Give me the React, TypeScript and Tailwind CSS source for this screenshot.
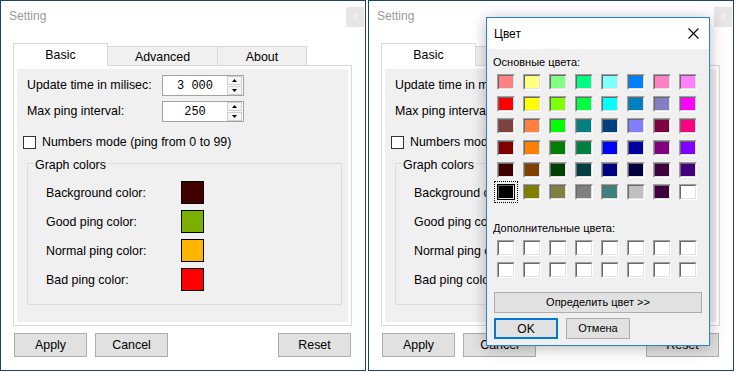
const basicColors = [
  ["#ff8080", "#ffff80", "#80ff80", "#00ff80", "#80ffff", "#0080ff", "#ff80c0", "#ff80ff"],
  ["#ff0000", "#ffff00", "#80ff00", "#00ff40", "#00ffff", "#0080c0", "#8080c0", "#ff00ff"],
  ["#804040", "#ff8040", "#00ff00", "#008080", "#004080", "#8080ff", "#800040", "#ff0080"],
  ["#800000", "#ff8000", "#008000", "#008040", "#0000ff", "#0000a0", "#800080", "#8000ff"],
  ["#400000", "#804000", "#004000", "#004040", "#000080", "#000040", "#400040", "#400080"],
  ["#000000", "#808000", "#808040", "#808080", "#408080", "#c0c0c0", "#400040", "#ffffff"],
];

const graphColors = [
  { label: "Background color:", color: "#400000" },
  { label: "Good ping color:", color: "#7cb000" },
  { label: "Normal ping color:", color: "#ffb400" },
  { label: "Bad ping color:", color: "#ff0000" },
];

function Arrow({ up }: { up?: boolean }) {
  return (
    <svg width="5" height="3" viewBox="0 0 5 3">
      <polygon points={up ? "0,3 2.5,0 5,3" : "0,0 2.5,3 5,0"} fill="#000" />
    </svg>
  );
}

function Spinner({ value }: { value: string }) {
  return (
    <div className="flex w-[82px] h-[21px] border border-[#a2a2a2] bg-white">
      <div className="flex-1 flex items-center justify-center font-['Liberation_Mono',monospace] text-[12px]">
        {value}
      </div>
      <div className="flex flex-col gap-[1px] pr-[1px] w-[16px]">
        <div className="flex-1 flex items-center justify-center border border-[#cfcfcf] bg-[#f6f6f6]">
          <Arrow up />
        </div>
        <div className="flex-1 flex items-center justify-center border border-[#cfcfcf] bg-[#f6f6f6]">
          <Arrow />
        </div>
      </div>
    </div>
  );
}

function Button({ label, className = "" }: { label: string; className?: string }) {
  return (
    <div className={`flex items-center justify-center w-[73px] h-[24px] border border-[#adadad] bg-[#e1e1e1] ${className}`}>
      {label}
    </div>
  );
}

function SettingWindow() {
  return (
    <div className="w-[366px] h-[371px] border border-[#1d4471] bg-white text-[12.4px]">
      <div className="w-[364px]">
        {/* title */}
        <div className="flex items-start justify-between h-[42px]">
          <span className="ml-[8px] mt-[8px] leading-[14px] text-[12px] text-[#9a9a9a]">Setting</span>
          <div className="mt-[6px] mr-[1px] flex items-center justify-center w-[18px] h-[20px] bg-[#e6e6e6] text-[9px] text-[#fafafa]">
            x
          </div>
        </div>

        {/* tabs */}
        <div className="flex items-end h-[22px] pl-[12px]">
          <div className="relative z-10 -mb-[1px] flex items-center justify-center w-[95px] h-[23px] border border-b-0 border-[#d9d9d9] bg-white">
            Basic
          </div>
          <div className="flex items-center justify-center pt-[3px] w-[110px] h-[19px] border-t border-r border-[#d9d9d9] bg-[#f0f0f0]">
            Advanced
          </div>
          <div className="flex items-center justify-center pt-[3px] w-[89px] h-[19px] border-t border-r border-[#d9d9d9] bg-[#f0f0f0]">
            About
          </div>
        </div>

        {/* tab page */}
        <div className="ml-[12px] w-[339px] h-[261px] border border-[#d9d9d9] bg-white p-[3px]">
          <div className="h-full bg-[#f0f0f0] pt-[6px]">
            <div className="flex items-center">
              <div className="w-[145px] pl-[10px]">Update time in milisec:</div>
              <Spinner value="3 000" />
            </div>
            <div className="flex items-center mt-[5px]">
              <div className="w-[145px] pl-[10px]">Max ping interval:</div>
              <Spinner value="250" />
            </div>

            <div className="flex items-center gap-[6px] mt-[14px] ml-[6px] h-[13px]">
              <div className="w-[13px] h-[13px] border border-[#333] bg-white" />
              <span>Numbers mode (ping from 0 to 99)</span>
            </div>

            {/* Graph colors */}
            <div className="relative mt-[14px] ml-[10px] w-[315px] h-[142px] border border-[#dcdcdc] pt-[17px] pl-[18px]">
              <span className="absolute left-[6px] -top-[6px] px-[1px] leading-[14px] bg-[#f0f0f0]">Graph colors</span>
              <div className="flex flex-col gap-[6px]">
                {graphColors.map((c) => (
                  <div key={c.label} className="flex items-center h-[23px]">
                    <div className="w-[135px] pt-[1px]">{c.label}</div>
                    <div className="w-[23px] h-[23px] border border-black" style={{ backgroundColor: c.color }} />
                  </div>
                ))}
              </div>
            </div>
          </div>
        </div>

        {/* bottom buttons */}
        <div className="flex mt-[7px] pl-[13px]">
          <Button label="Apply" />
          <Button label="Cancel" className="ml-[8px]" />
          <Button label="Reset" className="ml-[110px]" />
        </div>
      </div>
    </div>
  );
}

function Swatch({ color, selected }: { color: string; selected?: boolean }) {
  return (
    <div className="relative w-[18px] h-[16px]">
      {selected && <div className="absolute -inset-[3px] border border-dotted border-black" />}
      <div className="relative w-full h-full border-t border-l border-t-[#a0a0a0] border-l-[#a0a0a0] border-b border-r border-b-white border-r-white">
        <div
          className="w-full h-full border-t border-l border-t-[#696969] border-l-[#696969] border-b border-r border-b-[#e3e3e3] border-r-[#e3e3e3]"
          style={{ backgroundColor: color }}
        />
        {selected && <div className="absolute -inset-[1px] border border-black" />}
      </div>
    </div>
  );
}

function ColorDialog() {
  return (
    <div className="absolute left-[486px] top-[17px] w-[224px] h-[329px] border border-[#2a82d4] bg-[#f0f0f0] text-[11px] shadow-[0_2px_14px_rgba(0,0,0,0.28)]">
      <div className="flex items-center justify-between h-[31px] bg-white pl-[7px] pr-[10px]">
        <span className="text-[12px]">Цвет</span>
        <svg width="11" height="11" viewBox="0 0 11 11">
          <path d="M0.5 0.5 L10.5 10.5 M10.5 0.5 L0.5 10.5" stroke="#000" strokeWidth="1.1" />
        </svg>
      </div>

      <div className="mt-[6px] ml-[6px] leading-[14px]">Основные цвета:</div>
      <div className="grid grid-cols-[repeat(8,18px)] gap-x-[8px] gap-y-[6px] mt-[5px] ml-[10px]">
        {basicColors.map((row, r) =>
          row.map((c, i) => <Swatch key={`${r}-${i}`} color={c} selected={r === 5 && i === 0} />)
        )}
      </div>

      <div className="mt-[21px] ml-[6px] leading-[14px]">Дополнительные цвета:</div>
      <div className="grid grid-cols-[repeat(8,18px)] gap-x-[8px] gap-y-[6px] mt-[5px] ml-[10px]">
        {Array.from({ length: 16 }).map((_, i) => (
          <Swatch key={i} color="#ffffff" />
        ))}
      </div>

      <div className="flex items-center justify-center mt-[14px] ml-[7px] w-[208px] h-[21px] border border-[#adadad] bg-[#e1e1e1]">
        Определить цвет &gt;&gt;
      </div>
      <div className="flex gap-[8px] mt-[5px] ml-[7px]">
        <div className="flex items-center justify-center w-[64px] h-[21px] border-2 border-[#0078d7] bg-[#e1e1e1] text-[12px]">OK</div>
        <div className="flex items-center justify-center w-[64px] h-[21px] border border-[#adadad] bg-[#e1e1e1]">Отмена</div>
      </div>
    </div>
  );
}

export default function App() {
  return (
    <div className="relative flex gap-[2px] w-[736px] h-[372px] bg-white text-[12px] text-black font-['Liberation_Sans',Arial,sans-serif]">
      <SettingWindow />
      <SettingWindow />
      <ColorDialog />
    </div>
  );
}
